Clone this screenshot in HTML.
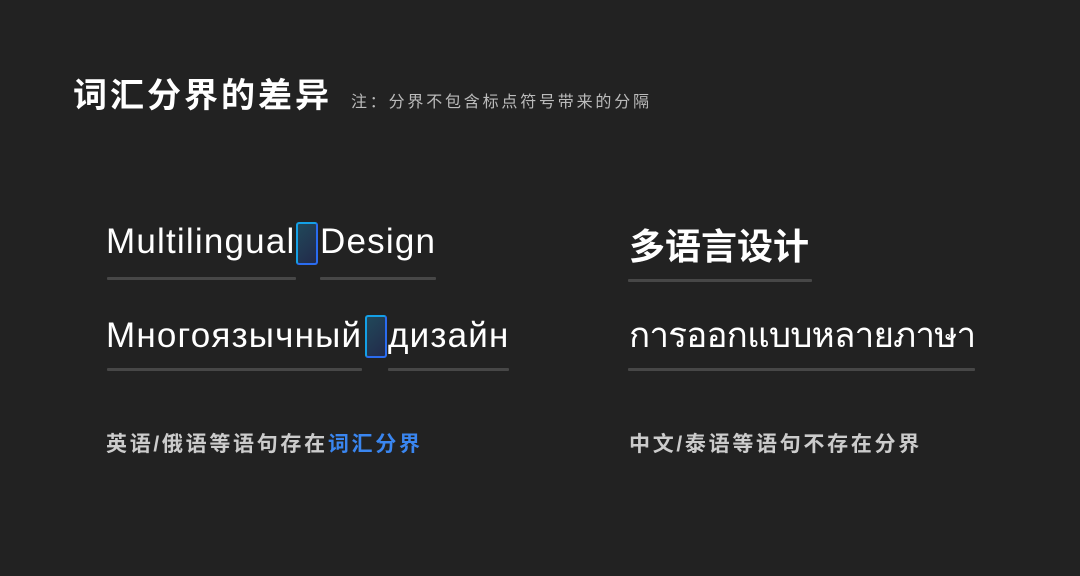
<!DOCTYPE html>
<html><head><meta charset="utf-8"><style>
html,body{margin:0;padding:0;background:#222;}
body{width:1080px;height:576px;position:relative;overflow:hidden;font-family:"Liberation Sans","Noto Sans CJK SC",sans-serif;color:#fff;}
.a{position:absolute;white-space:nowrap;line-height:1;}
.ln{position:absolute;height:3px;background:#474747;border-radius:1px;}
.box{position:absolute;box-sizing:border-box;border:2px solid #1a8fe6;border-radius:3px;background:linear-gradient(135deg,#21485a,#222a4a);border-color:#14a0e6 #2a6cf0 #2a6cf0 #14a0e6;}
.lat{font-size:35px;letter-spacing:1.2px;}
</style></head><body>
<div class="a" style="left:73px;top:79px;font-size:34px;font-weight:bold;letter-spacing:3px;">词汇分界的差异</div>
<div class="a" style="left:351px;top:95px;font-size:16px;color:#bbb;letter-spacing:2.8px;">注：分界不包含标点符号带来的分隔</div>

<div class="a lat" style="left:106px;top:224px;">Multilingual</div>
<div class="box" style="left:296px;top:222px;width:22px;height:43px;"></div>
<div class="a lat" style="left:320px;top:224px;">Design</div>
<div class="ln" style="left:107px;top:277px;width:189px;"></div>
<div class="ln" style="left:320px;top:277px;width:116px;"></div>

<div class="a lat" style="left:106px;top:318px;">Многоязычный</div>
<div class="box" style="left:365px;top:315px;width:22px;height:43px;"></div>
<div class="a lat" style="left:388px;top:318px;">дизайн</div>
<div class="ln" style="left:107px;top:368px;width:255px;"></div>
<div class="ln" style="left:388px;top:368px;width:121px;"></div>

<div class="a" style="left:629px;top:229px;font-size:36px;font-weight:bold;letter-spacing:0px;">多语言设计</div>
<div class="ln" style="left:628px;top:279px;width:184px;"></div>
<div class="a" style="left:629px;top:318px;font-size:35px;letter-spacing:-0.8px;">การออกแบบหลายภาษา</div>
<div class="ln" style="left:628px;top:368px;width:347px;"></div>

<div class="a" style="left:106px;top:434px;font-size:21px;color:#ccc;letter-spacing:2.7px;font-weight:bold;">英语/俄语等语句存在<span style="color:#3a86f0;">词汇分界</span></div>
<div class="a" style="left:629px;top:434px;font-size:21px;color:#ccc;letter-spacing:2.7px;font-weight:bold;">中文/泰语等语句不存在分界</div>
</body></html>
